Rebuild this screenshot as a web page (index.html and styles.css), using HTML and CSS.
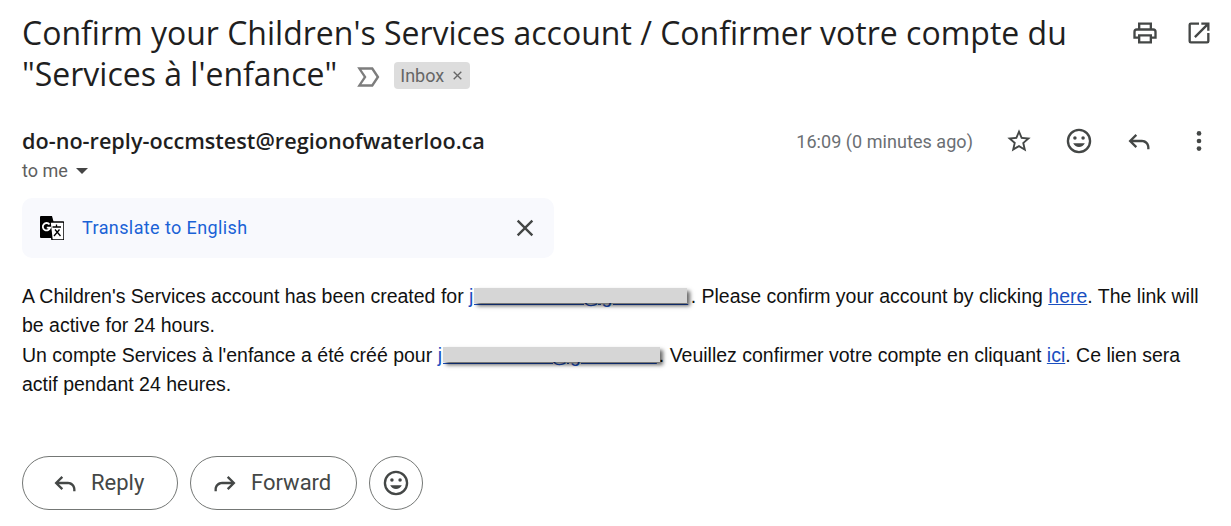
FILE: index.html
```html
<!DOCTYPE html>
<html lang="en">
<head>
<meta charset="utf-8">
<title>Confirm your Children's Services account</title>
<link rel="stylesheet" href="styles.css">
</head>
<body>
<main class="mail">
  <header class="subject-row">
    <h1 class="subject">Confirm your Children's Services account / Confirmer votre compte du<br>"Services à l'enfance"<svg class="important" viewBox="0 0 24 24"><path d="M2 3h14.500l6 9-6 9H2l6-9z M6 5.200l4.600 6.800L6 18.800h9.300l4.500-6.800-4.500-6.800z" fill-rule="evenodd"/></svg><span class="label">Inbox<svg class="label-x" viewBox="0 0 24 24"><path d="M5 5l14 14M19 5L5 19"/></svg></span></h1>
    <div class="top-icons">
      <svg class="icon" viewBox="0 0 24 24"><path d="M19 8h-1V3H6v5H5a3 3 0 0 0-3 3v6h4v4h12v-4h4v-6a3 3 0 0 0-3-3zM8 5h8v3H8zm8 14H8v-4h8zm4-4h-2v-2H6v2H4v-4a1 1 0 0 1 1-1h14a1 1 0 0 1 1 1z"/></svg>
      <svg class="icon" viewBox="0 0 24 24"><path d="M19 19H5V5h7V3H5a2 2 0 0 0-2 2v14a2 2 0 0 0 2 2h14a2 2 0 0 0 2-2v-7h-2zM14 3v2h3.590l-9.830 9.830 1.410 1.410L19 6.410V10h2V3z"/></svg>
    </div>
  </header>

  <section class="sender-row">
    <div class="sender">
      <div class="from">do-no-reply-occmstest@regionofwaterloo.ca</div>
      <div class="to">to me<span class="caret"></span></div>
    </div>
    <div class="meta">
      <span class="time">16:09 (0 minutes ago)</span>
      <svg class="icon" viewBox="0 0 24 24"><path d="M22 9.240l-7.190-.620L12 2 9.190 8.630 2 9.240l5.460 4.730L5.820 21 12 17.270 18.180 21l-1.630-7.030zM12 15.400l-3.760 2.270 1-4.280-3.320-2.880 4.380-.380L12 6.100l1.710 4.040 4.380.380-3.320 2.880 1 4.280z"/></svg>
      <svg class="icon" viewBox="0 0 24 24"><path d="M12 1.500a10.500 10.500 0 1 0 0 21 10.500 10.500 0 0 0 0-21zm0 19a8.500 8.500 0 1 1 0-17 8.500 8.500 0 0 1 0 17z"/><circle cx="8.500" cy="9.500" r="1.500"/><circle cx="15.500" cy="9.500" r="1.500"/><path d="M7 14c1 2 2.800 3.200 5 3.200s4-1.200 5-3.200z"/></svg>
      <svg class="icon" viewBox="0 0 24 24"><path d="M21 19v-1.500c0-3.600-2.900-6.500-6.500-6.500H6.830l3.580-3.590L9 6l-6 6 6 6 1.410-1.410L6.830 13h7.670c2.480 0 4.500 2.020 4.500 4.500V19z"/></svg>
      <svg class="icon" viewBox="0 0 24 24"><circle cx="12" cy="5.500" r="2"/><circle cx="12" cy="12" r="2"/><circle cx="12" cy="18.500" r="2"/></svg>
    </div>
  </section>

  <div class="translate">
    <svg class="gt" viewBox="0 0 24 24">
      <path d="M1 0h11l6 22H1a1 1 0 0 1-1-1V1a1 1 0 0 1 1-1z" fill="#000"/>
      <path d="M10 6h13a1 1 0 0 1 1 1v16a1 1 0 0 1-1 1H12z" fill="#fff" stroke="#000" stroke-width="1.500"/>
      <path d="M12.500 11h8.500M16.500 8.500V11M14 20l5.500-6.500M15 13.500l5.500 6.500" fill="none" stroke="#000" stroke-width="1.300"/>
      <path d="M9.500 8.500a3.700 3.700 0 1 0 .6 3.200H6.800" fill="none" stroke="#fff" stroke-width="1.800"/>
    </svg>
    <span class="translate-link">Translate to English</span>
    <svg class="close" viewBox="0 0 24 24"><path d="M19 6.410 17.590 5 12 10.590 6.410 5 5 6.410 10.590 12 5 17.590 6.410 19 12 13.410 17.590 19 19 17.590 13.410 12z"/></svg>
  </div>

  <article class="body">
    <p>A Children's Services account has been created for <a class="redacted r1" href="#">j&nbsp;&nbsp;&nbsp;&nbsp;&nbsp;&nbsp;&nbsp;&nbsp;&nbsp;&nbsp;&nbsp;&nbsp;&nbsp;&nbsp;&nbsp;&nbsp;&nbsp;&nbsp;&nbsp;&nbsp;@g&nbsp;&nbsp;&nbsp;&nbsp;&nbsp;&nbsp;&nbsp;&nbsp;&nbsp;&nbsp;&nbsp;&nbsp;&nbsp;&nbsp;</a>. Please confirm your account by clicking <a href="#">here</a>. The link will be active for 24 hours.</p>
    <p>Un compte Services à l'enfance a été créé pour <a class="redacted r2" href="#">j&nbsp;&nbsp;&nbsp;&nbsp;&nbsp;&nbsp;&nbsp;&nbsp;&nbsp;&nbsp;&nbsp;&nbsp;&nbsp;&nbsp;&nbsp;&nbsp;&nbsp;&nbsp;&nbsp;&nbsp;@g&nbsp;&nbsp;&nbsp;&nbsp;&nbsp;&nbsp;&nbsp;&nbsp;&nbsp;&nbsp;&nbsp;&nbsp;&nbsp;&nbsp;</a>. Veuillez confirmer votre compte en cliquant <a href="#">ici</a>. Ce lien sera actif pendant 24 heures.</p>
  </article>

  <div class="actions">
    <button class="pill reply"><svg class="icon" viewBox="0 0 24 24"><path d="M21 19v-1.500c0-3.600-2.900-6.500-6.500-6.500H6.830l3.580-3.590L9 6l-6 6 6 6 1.410-1.410L6.830 13h7.670c2.480 0 4.500 2.020 4.500 4.500V19z"/></svg>Reply</button>
    <button class="pill forward"><svg class="icon" viewBox="0 0 24 24"><path d="M3 19v-1.500C3 13.900 5.900 11 9.500 11h7.670l-3.580-3.590L15 6l6 6-6 6-1.410-1.410L17.170 13H9.500C7.020 13 5 15.020 5 17.500V19z"/></svg>Forward</button>
    <button class="round"><svg class="icon" viewBox="0 0 24 24"><path d="M12 1.500a10.500 10.500 0 1 0 0 21 10.500 10.500 0 0 0 0-21zm0 19a8.500 8.500 0 1 1 0-17 8.500 8.500 0 0 1 0 17z"/><circle cx="8.500" cy="9.500" r="1.500"/><circle cx="15.500" cy="9.500" r="1.500"/><path d="M7 14c1 2 2.800 3.200 5 3.200s4-1.200 5-3.200z"/></svg></button>
  </div>
</main>
</body>
</html>
```

FILE: styles.css
```css
* { box-sizing: border-box; }
html, body { margin: 0; padding: 0; background: #fff; }
body { width: 1231px; height: 526px; overflow: hidden; font-family: "Roboto", "Liberation Sans", sans-serif; color: #202124; }
.mail { padding: 12px 18px 0 22px; }

.subject-row { display: flex; justify-content: space-between; align-items: flex-start; height: 85px; }
.subject { margin: 0; font-family: "Open Sans", "Roboto", sans-serif; font-weight: 400; font-size: 32px; line-height: 41px; color: #1f1f1f; white-space: nowrap; }
.important { width: 26px; height: 26px; fill: #7d7d7d; margin-left: 18px; vertical-align: -4px; }
.label { display: inline-flex; align-items: center; height: 27px; margin-left: 13px; padding: 0 6px; background: #dddddd; border-radius: 4px; font-family: "Roboto", sans-serif; font-size: 18px; color: #666; vertical-align: 4px; line-height: 27px; }
.label-x { width: 13px; height: 13px; margin-left: 7px; fill: none; stroke: #666; stroke-width: 2.500; }
.top-icons { display: flex; gap: 26px; padding-top: 7px; }
.icon { width: 28px; height: 28px; fill: #444746; flex: none; }

.sender-row { display: flex; justify-content: space-between; align-items: flex-start; margin-top: 30px; }
.from { font-family: "Open Sans", sans-serif; font-weight: 600; font-size: 21.650px; line-height: 28px; color: #1f1f1f; }
.to { display: flex; align-items: center; font-size: 18px; line-height: 24px; margin-top: 4px; color: #5e5e5e; }
.caret { width: 0; height: 0; margin-left: 8px; border: 6px solid transparent; border-top-color: #444; border-bottom: 0; }
.meta { display: flex; align-items: center; height: 28px; }
.time { font-size: 18px; color: #6b6f73; margin-right: 32px; letter-spacing: 0.05px; }
.meta .icon + .icon { margin-left: 32px; }

.translate { display: flex; align-items: center; width: 532px; height: 60px; margin-top: 15px; padding: 0 18px; background: #f8f9fd; border-radius: 10px; }
.gt { width: 24px; height: 24px; }
.translate-link { margin: 0 0 2px 18px; font-size: 18px; color: #1a62d6; letter-spacing: 0.4px; }
.close { width: 28px; height: 28px; fill: #444746; margin-left: auto; margin-right: -3px; }

.body { margin-top: 24px; font-family: "Liberation Sans", Arial, sans-serif; font-size: 19.500px; line-height: 29.400px; color: #111; }
.body p { margin: 0; }
.body a { color: #1a4fc0; }
.redacted { position: relative; }
.r1 { margin-right: 2.400px; }
.r2 { margin-right: 2px; }
.redacted::after { content: ""; position: absolute; background: #d6d6d6; box-shadow: 3px 3px 4px rgba(0,0,0,.6); left: 5px; right: 1px; top: 3px; bottom: 4px; }
.r2::after { right: -3px; }

.actions { display: flex; gap: 12px; margin-top: 56px; }
.pill, .round { display: flex; align-items: center; height: 54px; background: #fff; border: 1px solid #747775; border-radius: 27px; font-family: "Roboto", sans-serif; font-size: 22px; color: #444746; padding: 0; }
.pill { gap: 12px; }
.reply { width: 156px; padding-left: 28px; }
.forward { width: 167px; padding-left: 20px; }
.round { width: 54px; justify-content: center; }
```
